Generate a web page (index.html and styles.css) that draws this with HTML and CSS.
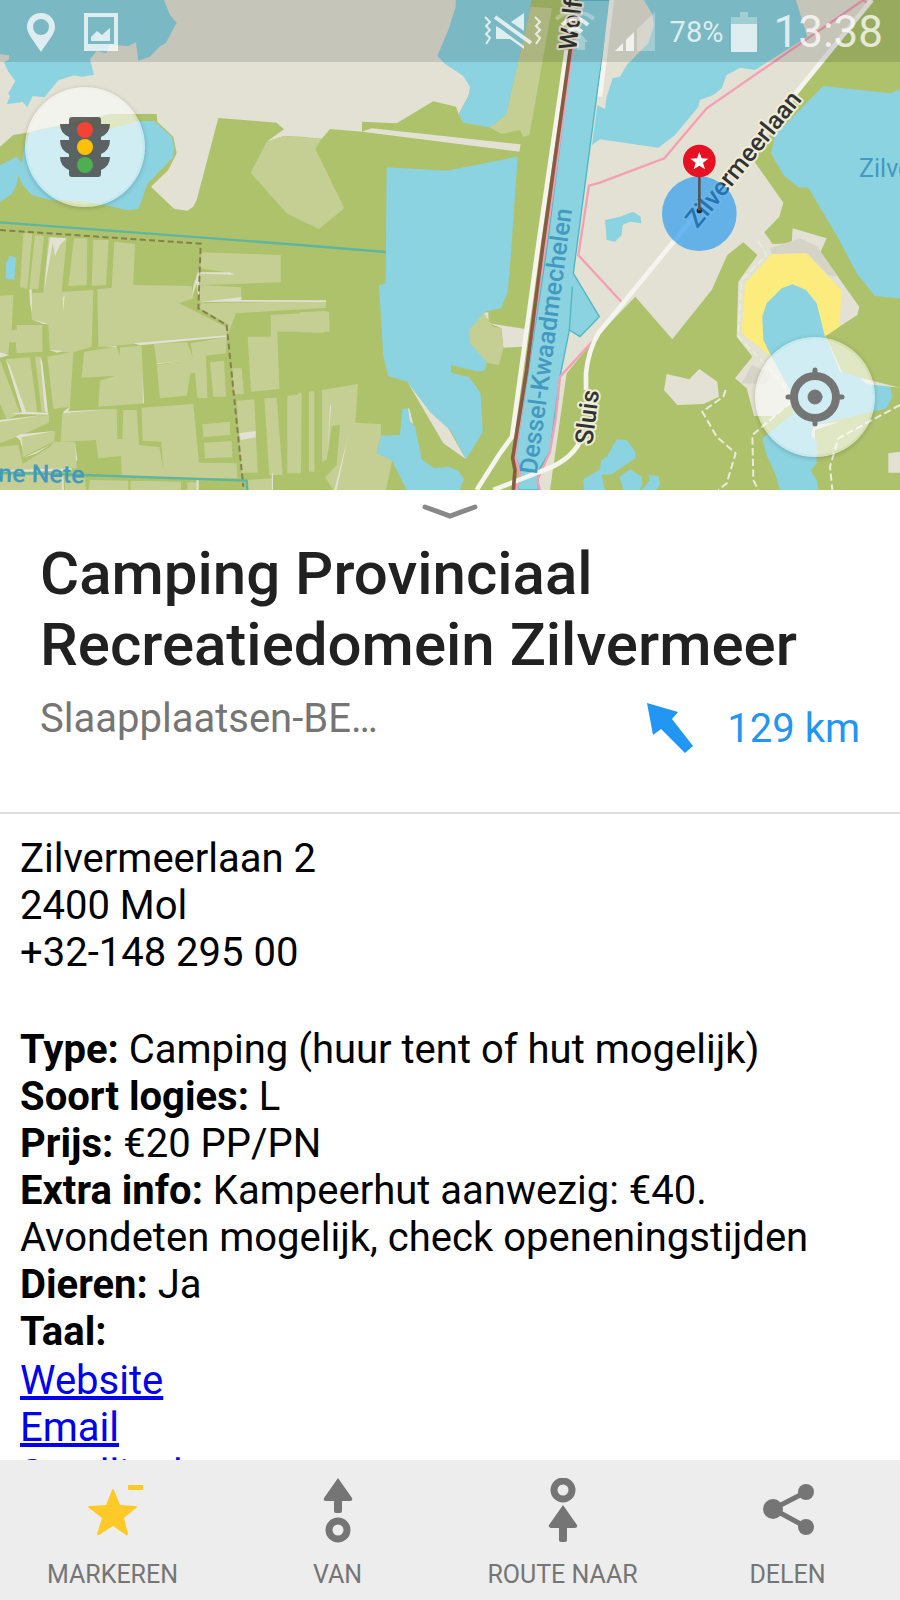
FILE: index.html
```html
<!DOCTYPE html>
<html lang="nl">
<head>
    <meta charset="UTF-8">
    <meta name="viewport" content="width=device-width, initial-scale=1.0">
    <title>Camping Provinciaal Recreatiedomein Zilvermeer</title>
    <link rel="stylesheet" href="styles.css">
</head>
<body>
    <div class="map">
        <svg class="map-canvas" viewBox="0 0 2700 1470" preserveAspectRatio="xMidYMin slice" aria-hidden="true">
            <rect class="forest" width="2700" height="1470"/>

            <!-- Open land -->
            <g class="land">
                <path d="M0 0H1380L1425 250 1376 343 1368 320 1300 304 1190 370 1086 365V395L990 387 965 416 900 410 852 408 800 425 852 388 830 368 655 354 590 600 580 620 562 632 522 626 453 560 505 510 530 460 520 410 472 365 470 342H330L80 398 40 405 0 440Z"/>
                <path d="M1835 0H2620L2395 270 2260 480 2350 608 2338 650 2293 697 2318 732 2375 730 2378 685 2480 715 2460 760 2510 825 2578 920 2572 945 2475 1008 2530 1120 2370 1210 2325 1248H2262L2240 1165 2205 1135 2257 1070 2210 1010 2215 845 2272 765 2230 727 2182 765 2135 870 2017 1018 1906 890 1790 1010 1700 1120 1650 1470H1600L1650 1355 1680 1130 1720 820 1790 250Z"/>
                <path d="M1115 385 1562 433 1558 455 1086 395Z"/>
                <path d="M1468 970 1580 988 1568 1040 1510 1043 1504 985Z"/>
                <path d="M2000 1122 2068 1138 2098 1107 2152 1145 2157 1190 2110 1212 2032 1215 1992 1170Z"/>
                <path d="M2665 1360 2700 1355V1418H2665Z"/>
                <path d="M1450 938 1465 937 1466 975 1480 985Z"/>
                <path d="M1222 1145 1290 1235 1345 1285 1398 1378 1330 1330Z"/>
                <path d="M1220 1228 1228 1225 1240 1273 1225 1260Z"/>
            </g>

            <!-- Farmland -->
            <g class="field">
                <path d="M1592 20 1656 25 1588 405 1570 411 1560 390 1505 402 1468 382 1518 345Z"/>
                <path d="M800 425 852 408 965 416 946 446 1033 625 957 687 900 660 860 640 752 518Z"/>
                <path d="M1452 940 1478 980 1504 985 1510 1045 1497 1095 1440 1085 1400 1040 1400 990Z"/>
                <path d="M966 1170 1074 1152 1066 1268 1143 1272V1307L1130 1360 1177 1380 1158 1470H1000L976 1432 1010 1395 1020 1275 996 1277 980 1380 966 1385Z"/>
                <path d="M927 1175 943 1173V1415H927ZM895 1178H905L903 1418H895Z"/>
                <path d="M900 937 980 933 988 975 970 998 900 997Z"/>
                <g transform="translate(0 720)">
                    <path d="M70-20H97L82 146 60 142ZM105-15 132-12 115 148 88 146Z"/>
                    <path d="M145-8 200-5 185 155 280 150 275 320 215 338 150 332 145 255 95 238 92 160 130 158Z"/>
                    <path d="M222-5H262L260 135 205 139ZM280 0H326L318 135 275 137Z"/>
                    <path d="M343 5 405 12 400 135 575 138 580 175 537 190 680 262V288L380 314 370 160 380 314 295 320 292 148 335 143Z"/>
                    <path d="M0 167 40 165 35 270H50V255H127V335L50 340 47 307H28L25 340 0 345Z"/>
                    <path d="M605 37 842 45V127L600 135 724 142V170L600 188V97L697 100 600 85Z"/>
                    <path d="M603 190 978 182V203L708 220 685 280 680 250 600 205Z"/>
                    <path d="M812 225 988 215V275L832 275 838 447 753 455 743 290H812Z"/>
                    <path d="M0 360 60 520 20 540 0 490ZM18 357 90 352 112 515 70 520ZM105 350H122L140 515H125Z"/>
                    <path d="M142 350 220 335 210 500 160 507Z"/>
                    <path d="M252 335 350 320 358 350 360 322 425 317 432 490 295 500 300 422 348 407 245 413Z"/>
                    <path d="M462 312 560 307 578 350 572 310 680 290 678 340 618 347 622 475 592 473 585 400 572 398 560 467 480 475 470 375 545 365 470 370Z"/>
                    <path d="M630 367 672 362 678 470H640ZM697 385H725L732 463H703Z"/>
                    <path d="M187 520 350 507 352 597H367L370 510H410L417 615 478 622 490 690 484 605 428 602 425 503 580 492 597 668 710 670 712 715 365 710 363 648 295 655 288 600 182 605Z"/>
                    <path d="M607 553 690 545V585L610 592ZM612 608 695 603 697 652 615 655Z"/>
                    <path d="M710 482 763 478 773 698H725ZM793 475 830 473 848 705H808ZM862 467 900 463V700H862Z"/>
                    <path d="M0 543 147 525V548L65 585 0 610ZM65 590 165 573 163 603 110 630 68 652ZM0 620 55 615 68 672 150 620 160 605H225L230 685 0 690Z"/>
                    <path d="M0 705H185V750H0ZM195 710 255 715 258 750H195ZM270 720 385 722V750H265ZM392 722 543 725V750H392ZM562 727H593V750H562ZM740 720 818 715V750H740Z"/>
                </g>
            </g>
            <g class="land" transform="translate(0 720)">
                <path d="M150-8 200-5 180 15 165 48 158 10 132 155 140 70Z"/>
                <path d="M88 148H95L96 220 90 190ZM95 238 145 252H130ZM188 175 194 165 190 215ZM150 330 188 332 172 338ZM0 337 28 345 0 353Z"/>
                <path d="M18 360 28 375 78 515 145 518V524L30 522 66 517ZM120 350 127 365 144 518 135 515Z"/>
                <path d="M400 310 680 286V291L420 316ZM300 322 350 318V321ZM0 540 147 523 0 546ZM47 590 60 583 165 573 65 592 68 630 60 600Z"/>
                <path d="M575 175 580 140 597 85V188L590 130ZM600 97 690 97 703 104 600 101ZM600 186 724 171V180L978 181V186L700 185Z"/>
                <path d="M718 580 767 573V592L722 600ZM190 515 210 500 205 514 350 506 190 520ZM225 605 232 660 228 665ZM68 655 150 615 110 640Z"/>
                <path d="M0 690 215 685V692L0 697ZM185 705H190L192 750H185ZM590 720H596V750H590ZM815 700H819V750H816ZM470 370 550 364 470 373ZM427 400 432 490H429Z"/>
                <path d="M990 490 993 500 983 640ZM1045 585 1010 750H1003Z"/>
            </g>

            <!-- Water -->
            <g class="water">
                <path d="M0 0H492L510 45 530 68 497 130 478 140 450 170 415 182 408 127 385 138 330 135 318 160 290 153 270 178 282 224 245 230 222 226 175 241 133 292 98 288 82 321 68 306 20 313 30 290 25 280 46 243 25 215 12 187 27 178V166L0 163Z"/>
                <path d="M0 495 50 470 65 490 75 430 90 395 200 375 330 388 415 363H463L515 410 523 440 520 470 442 552 415 627 380 630 315 615 240 603 150 600 95 585 68 555 55 525 50 555 35 583 0 605Z"/>
                <path d="M1367 0H1594L1590 30 1518 345 1468 382 1390 368 1376 343 1405 290 1410 260 1390 228 1335 192 1312 167 1345 90 1367 20Z"/>
                <path d="M1160 502 1340 512 1553 470 1533 760 1523 877 1503 925 1455 935 1407 990 1410 1030 1460 1085 1455 1110 1435 1115 1353 1095V1118L1408 1132 1442 1180 1448 1297 1398 1378 1355 1295 1290 1235 1222 1145 1165 1128 1150 1070 1137 855 1157 850Z"/>
                <path d="M1207 1227 1224 1225 1230 1265 1245 1280 1265 1378 1303 1405 1345 1400 1375 1412 1392 1438 1378 1470H1220L1175 1380 1130 1360 1143 1307 1200 1305Z"/>
                <path d="M1932 0H2388L2422 110 2265 210 2220 203 2180 225 2165 265 2140 285 2100 300 2095 320 2025 405 1975 443 1800 418 1776 435 1792 315 1815 327 1820 290 1838 235 1860 230 1880 195 1945 130 1962 75 1955 40Z"/>
                <path d="M2470 258 2670 280 2700 268V895L2625 888 2570 820 2515 715 2425 563 2395 562 2350 525 2313 460 2325 405Z"/>
                <path d="M1815 660 1860 650 1900 635 1922 650 1924 670 1890 665 1868 675 1865 705 1845 725 1820 720Z"/>
                <path d="M17 790 30 767 48 773 43 838H18Z"/>
                <path d="M1850 1318 1880 1320 1906 1355V1375L1835 1423 1805 1425 1815 1470H1752L1750 1438 1800 1408 1803 1380 1820 1370Z"/>
                <path d="M1858 1430 1890 1408 1925 1430 1927 1450 1920 1470H1870ZM1945 1425 1975 1428 1980 1455 1970 1470H1925L1950 1440Z"/>
            </g>

            <!-- Beach -->
            <path class="paved" d="M2310 745 2400 715 2450 738 2515 830 2485 825 2420 760 2315 762ZM2225 1150 2255 1095 2310 1120 2300 1152Z"/>
            <path class="beach" d="M2315 763 2420 760 2525 872 2518 980 2475 1010 2320 1075 2225 1000 2235 850Z"/>
            <path class="forest" d="M2478 1006 2600 1000 2640 1140 2525 1122Z"/>
            <path class="water" d="M2287 950 2300 910 2345 865 2378 853 2418 870 2450 910 2475 1010 2525 1115 2600 1140 2670 1160 2677 1190 2660 1225 2450 1275 2438 1290 2450 1330V1390L2432 1412 2450 1440 2455 1470H2340L2325 1420 2300 1365 2287 1315 2380 1240 2375 1180 2315 1070 2290 1020Z"/>
            <path class="land" d="M2580 1133 2700 1163 2600 1152ZM2440 1275 2520 1265 2445 1290V1320L2434 1305ZM2478 1010 2527 1118 2520 1115Z"/>

            <!-- Canal -->
            <path class="canal" d="M1725 0H1835L1795 250 1720 820 1798 950 1740 1010 1708 990 1680 1130 1650 1355 1615 1412V1470H1553L1562 1410 1546 1370 1640 750 1712 180Z"/>
            <path class="canal-edge" d="M1708 990 1717 860"/>

            <!-- Ditches and tracks -->
            <path class="ditch" d="M0 667 900 735 1157 756M0 1417 250 1425 740 1442 742 1470"/>
            <path class="border" d="M0 690 602 731 595 925 680 975 730 1460"/>
            <path class="path" d="M2275 725 2300 765 2225 840 2215 1010 2350 1150 2370 1210 2257 1305 2260 1440 2275 1470M2177 1170 2170 1190 2107 1235 2150 1310 2207 1360 2180 1450 2155 1470M2700 1215 2515 1315 2490 1400 2497 1470"/>
            <path class="cycle" d="M2602 10 2590 0 2120 325 1993 475 1800 548 1767 557 1735 765 1870 912M1795 1005 1680 1130 1668 1250 1650 1355 1612 1440 1620 1470M1725 90 1635 745 1545 1370 1560 1420 1550 1470"/>
            <path class="road" d="M2615 0 2395 270 2000 750 1795 1000Q1765 1050 1758 1120V1170M1740 1325Q1710 1385 1620 1415L1480 1470M1700 150 1617 720 1536 1310 1500 1360 1430 1470M1835 0 1800 290"/>
            <path class="rail" d="M1730 0 1712 140 1628 740 1580 1110 1538 1375 1545 1410 1540 1470"/>

            <!-- Place names -->
            <g class="water-name">
                <text transform="translate(1610 1424) rotate(-82.4)">Dessel-Kwaadmechelen</text>
                <text transform="translate(-6 1445) rotate(1)">ne Nete</text>
                <text class="lake-name" x="2577" y="531">Zilvermeer</text>
            </g>
            <g class="road-name">
                <text transform="translate(2092 688) rotate(-51)">Zilvermeerlaan</text>
                <text transform="translate(1777 1336) rotate(-83)">Sluis</text>
                <text transform="translate(1728 153) rotate(-83)">Wolf</text>
            </g>

            <!-- Selected place -->
            <circle class="accuracy" cx="2098" cy="641" r="112"/>
            <circle cx="2098" cy="632" r="8" fill="#222"/>
            <path d="M2098 525V632" stroke="#555" stroke-width="8"/>
            <circle cx="2098" cy="483" r="49" fill="#e81123"/>
            <path d="M2098 456 2105 475 2125 476 2109 488 2115 508 2098 497 2081 508 2087 488 2071 476 2091 475Z" fill="#fff"/>
        </svg>

        <div class="status-bar">
            <svg width="30" height="40" viewBox="0 0 30 40"><path fill-rule="evenodd" d="M15 1C7 1 1 7 1 15C1 22 8 29 15 40C22 29 29 22 29 15C29 7 23 1 15 1ZM15 7A8 8 0 1 1 15 23A8 8 0 1 1 15 7Z"/></svg>
            <svg class="icon-picture" width="34" height="38" viewBox="0 0 34 38"><path fill-rule="evenodd" d="M0 0H34V38H0ZM4 4V31H30V4ZM7 28V24L13 18 18 22 26 15V28Z"/></svg>
            <svg class="icon-mute" width="58" height="38" viewBox="0 0 58 38"><path d="M12 13V26H26L40 36V33L17 16ZM27 9 40 0V18Z"/><path class="stroke" d="M11 4 47 30" stroke-width="4"/><path class="stroke" d="M1 4 6 9 2 13 6 17 2 21 6 25 2 31M51 4 56 9 52 13 56 17 52 21 56 25 52 31" stroke-width="2"/></svg>
            <svg width="40" height="40" viewBox="0 0 40 40"><path class="stroke" d="M7 13Q20 0 33 13M13 20Q20 13 27 20" stroke-width="4"/><path class="stroke faint" d="M1 7Q20-8 39 7" stroke-width="4"/><path class="faint" d="M26 22 33 30H30V38H22V30H18Z"/></svg>
            <svg class="icon-signal" width="40" height="40" viewBox="0 0 40 40"><path class="faint" d="M22 39V17L40 0V39Z"/><path d="M0 39 8 31V39ZM11 39V28L19 20V39Z"/></svg>
            <span class="battery-level">78%</span>
            <svg width="26" height="40" viewBox="0 0 26 40"><path class="faint" d="M9 0H17V5H26V12H0V5H9Z"/><path d="M0 12H26V40H0Z"/></svg>
            <span class="clock">13:38</span>
        </div>

        <button class="map-button traffic-button" aria-label="Verkeer">
            <svg width="50" height="62" viewBox="0 0 50 62">
                <path fill="#333" fill-opacity=".75" d="M12 1H38Q41 1 41 4V8H50Q50 17 41 21V24H50Q50 34 41 38V41H50Q50 50 41 54V58Q41 61 38 61H12Q9 61 9 58V54Q0 50 0 41H9V38Q0 34 0 24H9V21Q0 17 0 8H9V4Q9 1 12 1Z"/>
                <circle cx="25" cy="14" r="8" fill="#f44336"/>
                <circle cx="25" cy="31" r="8" fill="#ffc107"/>
                <circle cx="25" cy="49" r="8" fill="#4caf50"/>
            </svg>
        </button>
        <button class="map-button locate-button" aria-label="Mijn locatie">
            <svg width="60" height="60" viewBox="0 0 60 60" fill="none" stroke="#757575" stroke-linecap="round">
                <circle cx="30" cy="30" r="21" stroke-width="8"/>
                <path d="M30 3V10M30 50V57M3 30H10M50 30H57" stroke-width="5"/>
                <circle cx="30" cy="30" r="7" fill="#757575" stroke-width="1"/>
            </svg>
        </button>
    </div>

    <div class="place-header">
        <svg class="handle" width="56" height="16" viewBox="0 0 56 16"><path d="M3 3 28 12 53 3" fill="none" stroke="#888" stroke-width="5" stroke-linecap="round"/></svg>
        <h1>Camping Provinciaal Recreatiedomein Zilvermeer</h1>
        <div class="place-meta">
            <span class="category">Slaapplaatsen-BE…</span>
            <span class="distance">
                <svg width="46" height="50" viewBox="0 0 46 50"><path d="M0 0 31 9 25 16 46 43 38 50 14 26 6 32Z" fill="#2196f3"/></svg>
                129 km
            </span>
        </div>
    </div>

    <div class="details">
        <p>Zilvermeerlaan 2<br>2400 Mol<br>+32-148 295 00</p>
        <p>
            <b>Type:</b> Camping (huur tent of hut mogelijk)<br>
            <b>Soort logies:</b> L<br>
            <b>Prijs:</b> €20 PP/PN<br>
            <b>Extra info:</b> Kampeerhut aanwezig: €40. Avondeten mogelijk, check openeningstijden<br>
            <b>Dieren:</b> Ja<br>
            <b>Taal:</b>
        </p>
        <div class="links">
            <a href="#">Website</a>
            <a href="#">Email</a>
            <a href="#">Satelliet kaart</a>
        </div>
    </div>

    <div class="toolbar">
        <button>
            <svg width="60" height="66" viewBox="0 0 60 66" fill="#ffc928"><path d="M29 12Q30 10 31 12L37 27 53 28Q55 29 53 30L41 40 45 56Q45 58 43 57L30 48 16 57Q14 58 14 56L19 40 6 30Q4 29 6 28L23 27Z"/><rect x="45" y="7" width="15" height="5" rx="1"/></svg>
            MARKEREN
        </button>
        <button>
            <svg width="60" height="66" viewBox="0 0 60 66"><path d="M30 0 44 20Q45 23 42 23H34V33Q34 35 32 35H28Q26 35 26 33V23H18Q15 23 16 20Z"/><circle cx="30" cy="52" r="9" fill="none" stroke="#757575" stroke-width="7"/></svg>
            VAN
        </button>
        <button>
            <svg width="60" height="66" viewBox="0 0 60 66"><circle cx="30" cy="12" r="9" fill="none" stroke="#757575" stroke-width="7"/><path d="M30 27 44 47Q45 49 42 50H34V62Q34 64 32 64H28Q26 64 26 62V50H18Q15 49 16 47Z"/></svg>
            ROUTE NAAR
        </button>
        <button>
            <svg width="60" height="66" viewBox="0 0 60 66"><path d="M48 14 15 31 48 49" fill="none" stroke="#757575" stroke-width="5"/><circle cx="15" cy="31" r="10"/><circle cx="48" cy="14" r="8"/><circle cx="48" cy="49" r="8"/></svg>
            DELEN
        </button>
    </div>
</body>
</html>
```
FILE: styles.css
```css
* {
    box-sizing: border-box;
}
body {
    margin: 0;
    height: 100vh;
    display: flex;
    flex-direction: column;
    overflow: hidden;
    background: #fff;
    font-family: Roboto, sans-serif;
    font-size: 40px;
    line-height: 47px;
    color: #000;
}
button {
    border: none;
    padding: 0;
    font-family: inherit;
    cursor: pointer;
}
svg {
    display: block;
    flex: none;
}

/* Map */
.map {
    position: relative;
    flex: none;
}
.map-canvas {
    width: 100%;
    height: 490px;
}
.forest { fill: #aec26c; }
.land { fill: #e2e1d3; }
.field { fill: #c5cf93; }
.water { fill: #8bd3e0; }
.paved { fill: #d6d4c6; }
.beach { fill: #fceb7d; }
.canal {
    fill: #8bd3e0;
    stroke: #4bb8c4;
    stroke-width: 4;
}
.ditch, .border, .path, .cycle, .road, .rail, .canal-edge {
    fill: none;
}
.canal-edge {
    stroke: #4bb8c4;
    stroke-width: 4;
}
.ditch {
    stroke: #5fb5a0;
    stroke-width: 7;
}
.border {
    stroke: #85804e;
    stroke-width: 6;
    stroke-dasharray: 18 10;
}
.path {
    stroke: #e9ebdc;
    stroke-width: 6;
    stroke-dasharray: 22 10;
}
.cycle {
    stroke: #f59fb5;
    stroke-width: 7;
}
.road {
    stroke: #f5f4ee;
    stroke-width: 14;
}
.rail {
    stroke: #875c43;
    stroke-width: 11;
}
.water-name {
    fill: #4499c0;
    font-size: 75px;
    font-weight: 500;
}
.lake-name {
    font-weight: 400;
}
.road-name {
    fill: #333;
    stroke: #eeedd8;
    stroke-width: 12;
    stroke-linejoin: round;
    paint-order: stroke;
    font-size: 75px;
    font-weight: 500;
}
.accuracy {
    fill: #2196f3;
    fill-opacity: .65;
}
.map-button {
    position: absolute;
    display: flex;
    align-items: center;
    justify-content: center;
    width: 120px;
    height: 120px;
    border: 2px solid rgba(255, 255, 255, .5);
    border-radius: 50%;
    background: rgba(255, 255, 255, .6);
    background-clip: padding-box;
    box-shadow: 0 1px 5px rgba(0, 0, 0, .2);
}
.traffic-button {
    left: 25px;
    top: 87px;
}
.locate-button {
    right: 25px;
    bottom: 33px;
}

/* Status bar */
.status-bar {
    position: absolute;
    top: 0;
    left: 0;
    right: 0;
    height: 62px;
    padding: 2px 17px 0 26px;
    display: flex;
    align-items: center;
    background: rgba(0, 0, 0, .12);
    color: rgba(255, 255, 255, .75);
    fill: rgba(255, 255, 255, .75);
}
.status-bar .stroke {
    fill: none;
    stroke: rgba(255, 255, 255, .75);
}
.status-bar .faint {
    opacity: .4;
}
.icon-picture {
    margin-left: 28px;
}
.icon-mute {
    margin-left: auto;
    margin-right: 13px;
}
.icon-signal {
    margin-left: 20px;
}
.battery-level {
    margin: 0 8px 0 15px;
    font-size: 29px;
}
.clock {
    margin-left: 16px;
    font-size: 44px;
}

/* Place */
.place-header {
    flex: none;
    height: 324px;
    padding: 0 40px;
    border-bottom: 2px solid #dedede;
}
.handle {
    margin: 14px auto 18px;
}
h1 {
    margin: 0;
    font-size: 60px;
    font-weight: 500;
    line-height: 71px;
    color: #212121;
}
.place-meta {
    display: flex;
    justify-content: space-between;
    margin-top: 15px;
}
.category {
    color: #757575;
}
.distance {
    display: flex;
    align-items: center;
    gap: 34px;
    margin-top: 8px;
    color: #2196f3;
}
.details {
    flex: 1;
    min-height: 0;
    overflow: hidden;
    padding: 21px 20px 0;
}
.details p {
    margin: 0 0 50px;
}
.details p + p {
    margin-bottom: 2px;
}
.links {
    display: flex;
    flex-direction: column;
    align-items: flex-start;
}
.links a {
    color: #0000ee;
}

/* Toolbar */
.toolbar {
    flex: none;
    display: flex;
    height: 140px;
    background: #ededed;
}
.toolbar button {
    flex: 1;
    display: flex;
    flex-direction: column;
    align-items: center;
    gap: 13px;
    padding-top: 18px;
    background: none;
    color: #757575;
    fill: #757575;
    font-size: 25px;
    line-height: 36px;
}
```
